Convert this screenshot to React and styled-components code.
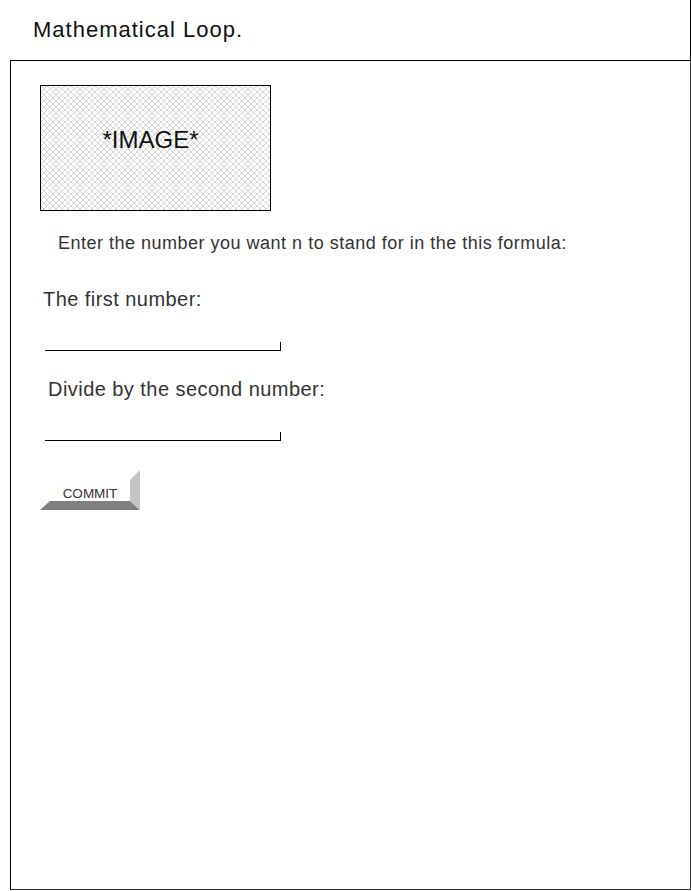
import React from "react";
import styled, { createGlobalStyle } from "styled-components";

const GlobalStyle = createGlobalStyle`
  body {
    margin: 0;
    background: #fff;
    font-family: "Liberation Sans", Arial, sans-serif;
  }
`;

const Page = styled.div`
  width: 691px;
  height: 891px;
  box-sizing: border-box;
`;

const Header = styled.header`
  height: 60px;
  box-sizing: border-box;
  border-right: 1px solid #000;
  display: flex;
  align-items: center;
  padding-left: 33px;
`;

const Title = styled.h1`
  margin: 0;
  font-size: 22px;
  font-weight: normal;
  color: #111;
  letter-spacing: 1px;
`;

const Frame = styled.main`
  margin-left: 10px;
  width: 681px;
  height: 830px;
  box-sizing: border-box;
  border: 1px solid #000;
  border-right-color: #333;
  border-bottom-color: #333;
  display: flex;
  flex-direction: column;
  align-items: flex-start;
  padding: 24px 0 0 29px;
`;

const ImageBox = styled.div`
  width: 231px;
  height: 126px;
  box-sizing: border-box;
  border: 1px solid #000;
  display: flex;
  align-items: center;
  justify-content: center;
  padding: 0 10px 16px 0;
  font-size: 24px;
  color: #111;
  background-color: #fff;
  background-size: 6px 6px;
  background-image:
    linear-gradient(45deg, transparent 42%, #d8d8d8 42%, #d8d8d8 58%, transparent 58%),
    linear-gradient(-45deg, transparent 42%, #d8d8d8 42%, #d8d8d8 58%, transparent 58%);
`;

const Text = styled.p`
  margin: ${({ $top }) => $top}px 0 0 ${({ $indent }) => $indent}px;
  font-size: ${({ $size }) => $size}px;
  letter-spacing: ${({ $spacing }) => $spacing || 0}px;
  line-height: 1;
  color: #333;
`;

const NumberInput = styled.input`
  margin: ${({ $top }) => $top}px 0 0 ${({ $indent }) => $indent}px;
  width: 236px;
  height: 9px;
  box-sizing: border-box;
  padding: 0;
  border: none;
  border-bottom: 1px solid #000;
  border-right: 1px solid #000;
  outline: none;
  background: transparent;
  font-family: inherit;
`;

const CommitButton = styled.button`
  position: relative;
  margin-top: 29px;
  width: 100px;
  height: 40px;
  padding: 6px 0 0 0;
  border: none;
  background: #fff;
  font-family: inherit;
  font-size: 13.5px;
  color: #333;
  text-align: center;

  &::before {
    content: "";
    position: absolute;
    left: 0;
    right: 0;
    bottom: 0;
    height: 9px;
    background: #808080;
    clip-path: polygon(10px 0, 90px 0, 100% 100%, 0 100%);
  }

  &::after {
    content: "";
    position: absolute;
    top: 0;
    right: 0;
    bottom: 0;
    width: 10px;
    background: #c4c4c4;
    clip-path: polygon(0 10px, 100% 0, 100% 100%, 0 31px);
  }
`;

export default function App() {
  return (
    <Page>
      <GlobalStyle />
      <Header>
        <Title>Mathematical Loop.</Title>
      </Header>
      <Frame>
        <ImageBox>*IMAGE*</ImageBox>
        <Text $top={23} $indent={18} $size={18} $spacing={0.5}>
          Enter the number you want n to stand for in the this formula:
        </Text>
        <Text $top={37} $indent={3} $size={20} $spacing={0.45}>
          The first number:
        </Text>
        <NumberInput $top={33} $indent={5} />
        <Text $top={28} $indent={8} $size={20} $spacing={0.45}>
          Divide by the second number:
        </Text>
        <NumberInput $top={33} $indent={5} />
        <CommitButton>COMMIT</CommitButton>
      </Frame>
    </Page>
  );
}
